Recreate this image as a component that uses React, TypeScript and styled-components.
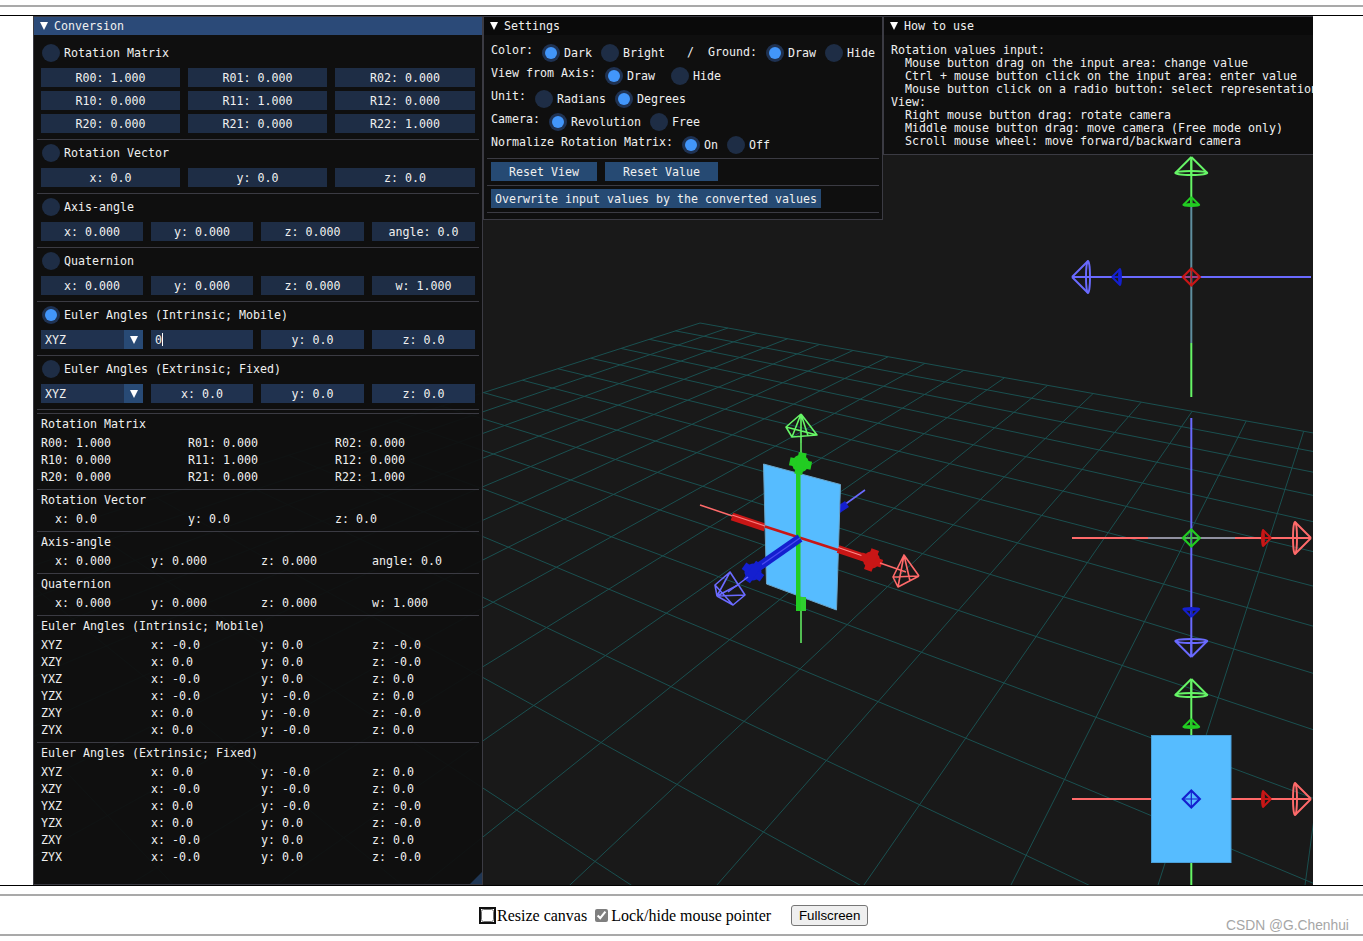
import React, { useMemo } from "react";
import styled, { createGlobalStyle } from "styled-components";

const Global = createGlobalStyle`
  html, body { margin: 0; padding: 0; background: #fff; overflow: hidden; }
  body { font-family: "Liberation Serif", serif; font-size: 16px; color: #000; }
`;

const Page = styled.div`
  position: relative;
  width: 1363px;
  height: 941px;
  padding-top: 5px;
  box-sizing: border-box;
`;
const Rule = styled.div<{ $gap: number }>`
  height: 2px;
  margin-top: ${(p) => p.$gap}px;
  background: #a9a9a9;
`;
const Band = styled.div`
  margin-top: 8px;
  padding-left: 33px;
  border-top: 1px solid #000;
  border-bottom: 1px solid #000;
  display: flex;
`;
const Canvas = styled.div`
  position: relative;
  width: 1280px;
  height: 869px;
  overflow: hidden;
  background: #191919;
  font-family: "DejaVu Sans Mono", "Liberation Mono", monospace;
  font-size: 11.63px;
  line-height: 13px;
  color: #f0f0f0;
`;
const Scene = styled.svg`
  position: absolute;
  inset: 0;
  display: block;
`;
const Win = styled.section<{ $l: number; $w: number; $h: number }>`
  position: absolute;
  top: 0;
  left: ${(p) => p.$l}px;
  width: ${(p) => p.$w}px;
  height: ${(p) => p.$h}px;
  box-sizing: border-box;
  border: 1px solid #3b3b43;
  background: rgba(15, 15, 15, 0.94);
  overflow: hidden;
`;
const Title = styled.header<{ $active?: boolean }>`
  height: 18px;
  box-sizing: border-box;
  display: flex;
  align-items: center;
  gap: 6px;
  padding-left: 6px;
  background: ${(p) => (p.$active ? "#2b4a78" : "#0a0a0a")};
  white-space: pre;
`;
const Tri = styled.i`
  display: block;
  width: 0;
  height: 0;
  border-left: 4.5px solid transparent;
  border-right: 4.5px solid transparent;
  border-top: 8px solid #fff;
`;
const Body = styled.div`
  padding: 0 3px;
`;
const Section = styled.div<{ $first?: boolean }>`
  padding: ${(p) => (p.$first ? 8 : 3)}px 4px 6px;
  border-bottom: 1px solid #3b3b43;
  display: flex;
  flex-direction: column;
  gap: 4px;
`;
const FieldStack = styled.div`
  margin-top: 2px;
  display: flex;
  flex-direction: column;
  gap: 4px;
`;
const Spacer = styled.div`
  height: 3px;
  border-bottom: 1px solid #3b3b43;
`;
const ReadOnly = styled.div<{ $last?: boolean }>`
  padding: 4px 4px 5px;
  ${(p) => (p.$last ? "" : "border-bottom: 1px solid #3b3b43;")}
`;
const ReadLabel = styled.div`
  height: 13px;
  margin-bottom: 6px;
  white-space: pre;
`;
const ReadRows = styled.div`
  display: flex;
  flex-direction: column;
  gap: 4px;
`;
const Grid = styled.div<{ $n: number }>`
  display: grid;
  grid-template-columns: ${(p) => (p.$n === 3 ? "139px 139px 140px" : "102px 102px 103px 103px")};
  column-gap: 8px;
`;
const Cell = styled.span`
  white-space: pre;
  height: 13px;
`;
const Frame = styled.div<{ $lit?: boolean }>`
  height: 19px;
  box-sizing: border-box;
  padding-top: 2px;
  display: flex;
  align-items: center;
  justify-content: center;
  background: ${(p) => (p.$lit ? "#20324f" : "#1e2d45")};
  white-space: pre;
`;
const Editing = styled(Frame)`
  justify-content: flex-start;
  padding-left: 4px;
`;
const Caret = styled.i`
  display: inline-block;
  width: 1px;
  height: 13px;
  margin-top: -2px;
  background: #fff;
`;
const Combo = styled.div`
  height: 19px;
  display: flex;
  align-items: center;
  justify-content: space-between;
  padding-left: 4px;
  background: #20324f;
`;
const ComboText = styled.span`
  padding-top: 2px;
`;
const ComboArrow = styled.div`
  width: 19px;
  height: 19px;
  display: flex;
  align-items: center;
  justify-content: center;
  background: #284a75;
`;
const Row = styled.div`
  display: flex;
  align-items: flex-start;
  gap: 8px;
  height: 19px;
  line-height: 15px;
  white-space: pre;
`;
const RadioItem = styled.span`
  display: inline-flex;
  align-items: center;
  gap: 4px;
  height: 19px;
  line-height: 13px;
`;
const RadioText = styled.span`
  padding-top: 2px;
`;
const Dot = styled.span<{ $on?: boolean }>`
  width: 18px;
  height: 18px;
  margin: 1px 0 0 1px;
  border-radius: 50%;
  background: ${(p) => (p.$on ? "#1f3252" : "#1e2d45")};
  display: flex;
  align-items: center;
  justify-content: center;
  &::after {
    content: "";
    display: ${(p) => (p.$on ? "block" : "none")};
    width: 12px;
    height: 12px;
    border-radius: 50%;
    background: #4296fa;
  }
`;
const SetBody = styled.div`
  padding: 8px 3px 0;
`;
const SetRows = styled.div`
  padding: 0 4px 4px;
  border-bottom: 1px solid #3b3b43;
  display: flex;
  flex-direction: column;
  gap: 4px;
`;
const BtnRow = styled.div`
  padding: 3px 4px 4px;
  border-bottom: 1px solid #3b3b43;
  display: flex;
  gap: 8px;
`;
const Btn = styled.div<{ $pad: number }>`
  height: 19px;
  box-sizing: border-box;
  padding: 2px ${(p) => p.$pad}px 0;
  display: flex;
  align-items: center;
  background: #264a73;
  white-space: pre;
`;
const Help = styled.pre`
  margin: 0;
  padding: 9px 7px 0;
  font: inherit;
  white-space: pre;
`;
const Grip = styled.div`
  position: absolute;
  right: 0;
  bottom: 0;
  width: 0;
  height: 0;
  border-left: 12px solid transparent;
  border-bottom: 12px solid #1f3654;
`;
const Controls = styled.div`
  height: 38px;
  padding: 1px 0 0 481px;
  display: flex;
  align-items: center;
  box-sizing: border-box;
  white-space: pre;
`;
const Check = styled.label<{ $after?: number }>`
  display: inline-flex;
  align-items: center;
  margin-right: ${(p) => p.$after ?? 0}px;
`;
const Box = styled.input<{ $focus?: boolean }>`
  margin: 0 3px 0 0;
  width: 13px;
  height: 13px;
  accent-color: #7f7f7f;
  ${(p) => (p.$focus ? "outline: 2px solid #101010; border-radius: 2px;" : "")}
`;
const Full = styled.button`
  width: 77px;
  height: 21px;
  padding: 0;
  font-family: "Liberation Sans", Arial, sans-serif;
  font-size: 13.33px;
  color: #000;
  background: #efefef;
  border: 1px solid #767676;
  border-radius: 3px;
`;
const Mark = styled.div`
  position: absolute;
  left: 1226px;
  top: 918px;
  font-family: "Liberation Sans", Arial, sans-serif;
  font-size: 13.8px;
  color: #a6a6a6;
  white-space: pre;
`;

/* ---------- 3D drawing ---------- */
const GREEN = "#66f566";
const DGREEN = "#22cc22";
const RED = "#ff6a6a";
const DRED = "#c81616";
const BLUE = "#6a6aff";
const DBLUE = "#141fcf";
const PLANE = "#56bcff";

function useGrid() {
  return useMemo(() => {
    const a = 0.0214, b = 0.0333;
    const VA = [-577, 94], VB = [1412, 94], P = [700, 323];
    const pr = (u: number, v: number) => {
      const d = 1 - a * u - b * v;
      return [
        (P[0] - a * u * VA[0] - b * v * VB[0]) / d,
        (P[1] - a * u * VA[1] - b * v * VB[1]) / d,
      ];
    };
    const N = 30, M = 30;
    const out: number[][] = [];
    for (let u = 0; u <= N; u++) {
      const vm = Math.min(M, (0.96 - a * u) / b);
      if (vm <= 0) continue;
      out.push([...pr(u, 0), ...pr(u, vm)]);
    }
    for (let v = 0; v <= M; v++) {
      const um = Math.min(N, (0.96 - b * v) / a);
      if (um <= 0) continue;
      out.push([...pr(0, v), ...pr(um, v)]);
    }
    return out;
  }, []);
}

const Cone: React.FC<{ x: number; y: number; r: number; c: string; s?: number }> = ({ x, y, r, c, s = 1 }) => (
  <g transform={`translate(${x} ${y}) rotate(${r}) scale(${s})`} fill="none" stroke={c} strokeWidth={1.9 / s}>
    <path d="M0 0L-16 16M0 0L16 16M0 0V18" />
    <ellipse cx={0} cy={16} rx={16} ry={2} />
  </g>
);
const Diamond: React.FC<{ x: number; y: number; c: string }> = ({ x, y, c }) => (
  <g transform={`translate(${x} ${y})`} fill="none" stroke={c} strokeWidth={2.2}>
    <path d="M0 -8.5L8.5 0L0 8.5L-8.5 0Z" />
    <path d="M0 -8.5V8.5M-8.5 0H8.5" strokeWidth={1.2} />
  </g>
);
const Head: React.FC<{ x: number; y: number; c: string; r: number }> = ({ x, y, c, r }) => (
  <g transform={`translate(${x} ${y}) rotate(${r})`} fill={c}>
    <circle r={8.5} />
    <rect x={-11} y={-4} width={22} height={8} />
    <rect x={-4} y={-11} width={8} height={22} />
  </g>
);
const L: React.FC<{ p: number[]; c: string; w?: number }> = ({ p, c, w = 1.5 }) => (
  <line x1={p[0]} y1={p[1]} x2={p[2]} y2={p[3]} stroke={c} strokeWidth={w} />
);
const Wire: React.FC<{ d: string; c: string }> = ({ d, c }) => (
  <path d={d} fill="none" stroke={c} strokeWidth={1.6} strokeLinejoin="round" />
);

const Drawing: React.FC = () => {
  const grid = useGrid();
  return (
    <Scene width={1280} height={869} viewBox="33 16 1280 869">
      <g stroke="#1a5050" strokeWidth={1}>
        {grid.map((l, i) => (
          <line key={i} x1={l[0]} y1={l[1]} x2={l[2]} y2={l[3]} />
        ))}
      </g>

      {/* perspective object */}
      <L p={[865, 490, 840, 508]} c={BLUE} w={1.6} />
      <L p={[838, 510, 847, 504]} c={DBLUE} w={7} />
      <L p={[700, 505, 765, 527]} c={RED} />
      <L p={[732, 516.5, 765, 527.5]} c={DRED} w={8} />
      <L p={[732, 515, 765, 526]} c="#ff7a7a" w={1.2} />
      <polygon points="763.5,464 840.5,484.5 836.5,610 766.5,584" fill={PLANE} stroke="#6aa4c8" strokeWidth={1} />
      <L p={[765, 526.5, 838, 550]} c={DRED} w={2.6} />
      <L p={[838, 549, 868, 559]} c={DRED} w={8} />
      <L p={[838, 547.5, 863, 556]} c="#ff8a8a" w={1.2} />
      <Head x={871.5} y={560} c={DRED} r={20} />
      <L p={[880, 563, 906, 572]} c={RED} />
      <Wire c={RED} d="M919 576L904 555L893 577L898 587L919 576M904 555L898 587M893 577L919 576M904 555L910 581" />
      <L p={[801, 643, 801, 600]} c={GREEN} />
      <L p={[801, 443, 801, 456]} c={GREEN} />
      <rect x={796} y={597} width={10} height={14} fill="#2fcf2f" />
      <rect x={796} y={466} width={4.5} height={145} fill={DGREEN} />
      <Head x={800.5} y={463.5} c={DGREEN} r={12} />
      <Wire c={GREEN} d="M801 414L786 427L792 437L817 435L801 414M801 414L792 437M786 427L817 435M801 414V443M801 414L808 436" />
      <L p={[800, 538, 757, 568]} c={DBLUE} w={8.5} />
      <L p={[800, 538, 762, 564.5]} c="#4a4af0" w={1.3} />
      <Head x={753} y={572} c={DBLUE} r={35} />
      <L p={[748, 577, 728, 592]} c={BLUE} />
      <Wire c={BLUE} d="M717 596L730 572L745 595L733 605L717 596M717 596L745 595M717 596L715 585L730 572M715 585L733 605M717 596L738 585" />

      {/* top view */}
      <L p={[1191.3, 397, 1191.3, 343]} c={GREEN} w={2} />
      <L p={[1191.3, 343, 1191.3, 207]} c="#5f8f9f" w={2} />
      <L p={[1191.3, 207, 1191.3, 160]} c={GREEN} w={2} />
      <L p={[1072, 277, 1311, 277]} c={BLUE} w={2} />
      <Cone x={1191.3} y={157} r={0} c={GREEN} />
      <Cone x={1191.3} y={197} r={0} c={DGREEN} s={0.5} />
      <Cone x={1072} y={277} r={-90} c={BLUE} />
      <Cone x={1112} y={277} r={-90} c={DBLUE} s={0.5} />
      <Diamond x={1191.3} y={277} c={DRED} />

      {/* middle view */}
      <L p={[1191.3, 418, 1191.3, 655]} c={BLUE} w={2} />
      <L p={[1072, 538, 1148, 538]} c={RED} w={2} />
      <L p={[1148, 538, 1235, 538]} c="#9090a0" w={2} />
      <L p={[1235, 538, 1309, 538]} c={RED} w={2} />
      <Cone x={1311} y={538} r={90} c={RED} />
      <Cone x={1271} y={538} r={90} c={DRED} s={0.5} />
      <Cone x={1191.3} y={657} r={180} c={BLUE} />
      <Cone x={1191.3} y={617} r={180} c={DBLUE} s={0.5} />
      <Diamond x={1191.3} y={538} c={DGREEN} />

      {/* front view */}
      <L p={[1072, 799, 1309, 799]} c={RED} w={2} />
      <L p={[1191.3, 886, 1191.3, 682]} c={GREEN} w={2} />
      <Cone x={1191.3} y={679} r={0} c={GREEN} />
      <Cone x={1191.3} y={719} r={0} c={DGREEN} s={0.5} />
      <Cone x={1311} y={799} r={90} c={RED} />
      <Cone x={1271} y={799} r={90} c={DRED} s={0.5} />
      <rect x={1151.5} y={735.5} width={79.5} height={127} fill={PLANE} stroke="#4a9fd8" />
      <Diamond x={1191.3} y={799} c={DBLUE} />
    </Scene>
  );
};

/* ---------- panels ---------- */
const Radio: React.FC<{ on?: boolean; label: string }> = ({ on, label }) => (
  <RadioItem>
    <Dot $on={on} />
    <RadioText>{label}</RadioText>
  </RadioItem>
);
const Fields: React.FC<{ items: string[]; n: number }> = ({ items, n }) => (
  <Grid $n={n}>
    {items.map((t) => (
      <Frame key={t}>{t}</Frame>
    ))}
  </Grid>
);
const ComboBox: React.FC = () => (
  <Combo>
    <ComboText>XYZ</ComboText>
    <ComboArrow>
      <Tri />
    </ComboArrow>
  </Combo>
);
const Read: React.FC<{ label: string; n: number; rows: string[][]; last?: boolean }> = ({ label, n, rows, last }) => (
  <ReadOnly $last={last}>
    <ReadLabel>{label}</ReadLabel>
    <ReadRows>
      {rows.map((r, i) => (
        <Grid $n={n} key={i}>
          {r.map((c, j) => (
            <Cell key={j}>{c}</Cell>
          ))}
        </Grid>
      ))}
    </ReadRows>
  </ReadOnly>
);

const intr = [
  ["XYZ", "x: -0.0", "y: 0.0", "z: -0.0"],
  ["XZY", "x: 0.0", "y: 0.0", "z: -0.0"],
  ["YXZ", "x: -0.0", "y: 0.0", "z: 0.0"],
  ["YZX", "x: -0.0", "y: -0.0", "z: 0.0"],
  ["ZXY", "x: 0.0", "y: -0.0", "z: -0.0"],
  ["ZYX", "x: 0.0", "y: -0.0", "z: 0.0"],
];
const extr = [
  ["XYZ", "x: 0.0", "y: -0.0", "z: 0.0"],
  ["XZY", "x: -0.0", "y: -0.0", "z: 0.0"],
  ["YXZ", "x: 0.0", "y: -0.0", "z: -0.0"],
  ["YZX", "x: 0.0", "y: 0.0", "z: -0.0"],
  ["ZXY", "x: -0.0", "y: 0.0", "z: 0.0"],
  ["ZYX", "x: -0.0", "y: 0.0", "z: -0.0"],
];
const helpText = `Rotation values input:
  Mouse button drag on the input area: change value
  Ctrl + mouse button click on the input area: enter value
  Mouse button click on a radio button: select representation
View:
  Right mouse button drag: rotate camera
  Middle mouse button drag: move camera (Free mode only)
  Scroll mouse wheel: move forward/backward camera`;

const Conversion: React.FC = () => (
  <Win $l={0} $w={450} $h={869}>
    <Title $active>
      <Tri />
      Conversion
    </Title>
    <Body>
      <Section $first>
        <Radio label="Rotation Matrix" />
        <FieldStack>
          <Fields n={3} items={["R00: 1.000", "R01: 0.000", "R02: 0.000"]} />
          <Fields n={3} items={["R10: 0.000", "R11: 1.000", "R12: 0.000"]} />
          <Fields n={3} items={["R20: 0.000", "R21: 0.000", "R22: 1.000"]} />
        </FieldStack>
      </Section>
      <Section>
        <Radio label="Rotation Vector" />
        <FieldStack>
          <Fields n={3} items={["x: 0.0", "y: 0.0", "z: 0.0"]} />
        </FieldStack>
      </Section>
      <Section>
        <Radio label="Axis-angle" />
        <FieldStack>
          <Fields n={4} items={["x: 0.000", "y: 0.000", "z: 0.000", "angle: 0.0"]} />
        </FieldStack>
      </Section>
      <Section>
        <Radio label="Quaternion" />
        <FieldStack>
          <Fields n={4} items={["x: 0.000", "y: 0.000", "z: 0.000", "w: 1.000"]} />
        </FieldStack>
      </Section>
      <Section>
        <Radio on label="Euler Angles (Intrinsic; Mobile)" />
        <FieldStack>
          <Grid $n={4}>
            <ComboBox />
            <Editing $lit>
              0<Caret />
            </Editing>
            <Frame $lit>y: 0.0</Frame>
            <Frame $lit>z: 0.0</Frame>
          </Grid>
        </FieldStack>
      </Section>
      <Section>
        <Radio label="Euler Angles (Extrinsic; Fixed)" />
        <FieldStack>
          <Grid $n={4}>
            <ComboBox />
            <Frame $lit>x: 0.0</Frame>
            <Frame $lit>y: 0.0</Frame>
            <Frame $lit>z: 0.0</Frame>
          </Grid>
        </FieldStack>
      </Section>
      <Spacer />
      <Read
        label="Rotation Matrix"
        n={3}
        rows={[
          ["R00: 1.000", "R01: 0.000", "R02: 0.000"],
          ["R10: 0.000", "R11: 1.000", "R12: 0.000"],
          ["R20: 0.000", "R21: 0.000", "R22: 1.000"],
        ]}
      />
      <Read label="Rotation Vector" n={3} rows={[["  x: 0.0", "y: 0.0", "z: 0.0"]]} />
      <Read label="Axis-angle" n={4} rows={[["  x: 0.000", "y: 0.000", "z: 0.000", "angle: 0.0"]]} />
      <Read label="Quaternion" n={4} rows={[["  x: 0.000", "y: 0.000", "z: 0.000", "w: 1.000"]]} />
      <Read label="Euler Angles (Intrinsic; Mobile)" n={4} rows={intr} />
      <Read label="Euler Angles (Extrinsic; Fixed)" n={4} rows={extr} last />
    </Body>
    <Grip />
  </Win>
);

const Spread = styled.span`
  margin-left: 7px;
`;

const Settings: React.FC = () => (
  <Win $l={450} $w={400} $h={204}>
    <Title>
      <Tri />
      Settings
    </Title>
    <SetBody>
      <SetRows>
        <Row>
          Color:
          <Radio on label="Dark" />
          <Radio label="Bright" />
          <RadioText>{"  /  Ground:"}</RadioText>
          <Radio on label="Draw" />
          <Radio label="Hide" />
        </Row>
        <Row>
          View from Axis:
          <Radio on label="Draw" />
          <Spread>
            <Radio label="Hide" />
          </Spread>
        </Row>
        <Row>
          Unit:
          <Radio label="Radians" />
          <Radio on label="Degrees" />
        </Row>
        <Row>
          Camera:
          <Radio on label="Revolution" />
          <Radio label="Free" />
        </Row>
        <Row>
          Normalize Rotation Matrix:
          <Radio on label="On" />
          <Radio label="Off" />
        </Row>
      </SetRows>
      <BtnRow>
        <Btn $pad={18}>Reset View</Btn>
        <Btn $pad={18}>Reset Value</Btn>
      </BtnRow>
      <BtnRow>
        <Btn $pad={4}>Overwrite input values by the converted values</Btn>
      </BtnRow>
    </SetBody>
  </Win>
);

const HowTo: React.FC = () => (
  <Win $l={850} $w={431} $h={139}>
    <Title>
      <Tri />
      How to use
    </Title>
    <Help>{helpText}</Help>
  </Win>
);

export default function App() {
  return (
    <Page>
      <Global />
      <Rule $gap={0} />
      <Band>
        <Canvas>
          <Drawing />
          <Conversion />
          <Settings />
          <HowTo />
        </Canvas>
      </Band>
      <Rule $gap={8} />
      <Controls>
        <Check $after={8}>
          <Box type="checkbox" $focus readOnly />
          Resize canvas
        </Check>
        <Check $after={20}>
          <Box type="checkbox" defaultChecked />
          Lock/hide mouse pointer
        </Check>
        <Full>Fullscreen</Full>
      </Controls>
      <Rule $gap={0} />
      <Mark>CSDN @G.Chenhui</Mark>
    </Page>
  );
}
